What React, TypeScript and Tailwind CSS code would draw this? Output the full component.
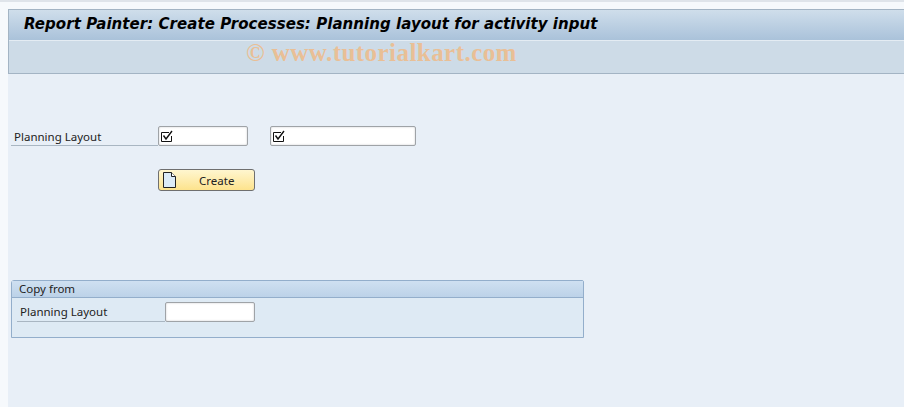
const uiFont = "font-['Noto_Sans','Liberation_Sans',sans-serif]";

function CheckBoxMark() {
  return (
    <svg width="13" height="13" viewBox="0 0 13 13" fill="none" className="shrink-0">
      <path d="M10.5 6V11.5H0.5V2.5H8" stroke="#111" strokeWidth="1" />
      <path d="M2.5 5.5L5 9L11 1" stroke="#111" strokeWidth="1.4" />
    </svg>
  );
}

function Field({ width, required }: { width: string; required?: boolean }) {
  return (
    <div className={`${width} h-5 bg-white border border-[#9fa3a7] rounded-[2px] flex items-center pl-[2px] shadow-[inset_0_0_2px_#c4c6c8]`}>
      {required && <CheckBoxMark />}
    </div>
  );
}

function PageIcon() {
  return (
    <svg width="13" height="16" viewBox="0 0 13 16" fill="none" className="shrink-0">
      <path d="M0.5 0.5H8.5L12.5 4.5V15.5H0.5Z" fill="#dcebf7" stroke="#222" />
      <path d="M8.5 0.5V4.5H12.5" fill="#fff" stroke="#222" />
    </svg>
  );
}

export default function App() {
  return (
    <div className={`${uiFont} relative w-[904px] h-[407px] overflow-hidden bg-[#f6f9fc] pl-2 pt-[9px] text-[#111]`}>
      <div className="absolute left-0 right-0 top-0 h-[2px] bg-[#dfe4ea]" />

      {/* Title and toolbar */}
      <div className="h-[65px] border-l border-t border-b border-[#a3b4c4] flex flex-col">
        <div className="h-[31px] shrink-0 bg-gradient-to-b from-[#cfdeeb] to-[#aac2da] border-b border-[#e4ecf3] pl-[15px] pb-[2px] flex items-center">
          <h1 className="font-['DejaVu_Sans',sans-serif] font-bold italic text-[15px] tracking-[0.05px] text-black whitespace-nowrap">
            Report Painter: Create Processes: Planning layout for activity input
          </h1>
        </div>
        <div className="flex-1 bg-[#cddbe7]" />
      </div>

      <div className="absolute left-[246px] top-[38px] font-['Liberation_Serif',serif] font-bold text-[25px] leading-[29px] text-[#e9bf96] whitespace-nowrap tracking-[0.45px]">
        © www.tutorialkart.com
      </div>

      {/* Main area */}
      <div className="h-[333px] bg-[#e8eff7] pl-[3px] pt-[52px]">
        <div className="flex items-start text-[11.5px]">
          <div className="w-[147px] h-5 border-b border-[#a9b6c2] pl-[3px] flex items-center pt-[2px] text-[#222]">Planning Layout</div>
          <Field width="w-[90px]" required />
          <div className="w-[22px]" />
          <Field width="w-[146px]" required />
        </div>

        <button className="mt-[23px] ml-[147px] w-[97px] h-[22px] rounded-[3px] border border-[#6f6f6f] bg-gradient-to-b from-[#fff6cf] to-[#fde38c] flex items-center pl-[4px] text-[11.5px] text-[#222]">
          <PageIcon />
          <span className="ml-[23px] pt-[2px]">Create</span>
        </button>

        <div className="mt-[89px] w-[573px] h-[58px] border border-[#93aecb] rounded-tr-[2px] rounded-tl-[3px] bg-[#deeaf4]">
          <div className="h-[17px] bg-gradient-to-b from-[#cfe0f1] to-[#bcd2e8] border-b border-[#93aecb] pl-[7px] text-[11.5px] leading-[16px] text-[#222]">Copy from</div>
          <div className="flex items-start pt-[4px] pl-[5px] text-[11.5px]">
            <div className="w-[148px] h-5 border-b border-[#a9b6c2] pl-[3px] flex items-center text-[#222]">Planning Layout</div>
            <Field width="w-[90px]" />
          </div>
        </div>
      </div>
    </div>
  );
}
